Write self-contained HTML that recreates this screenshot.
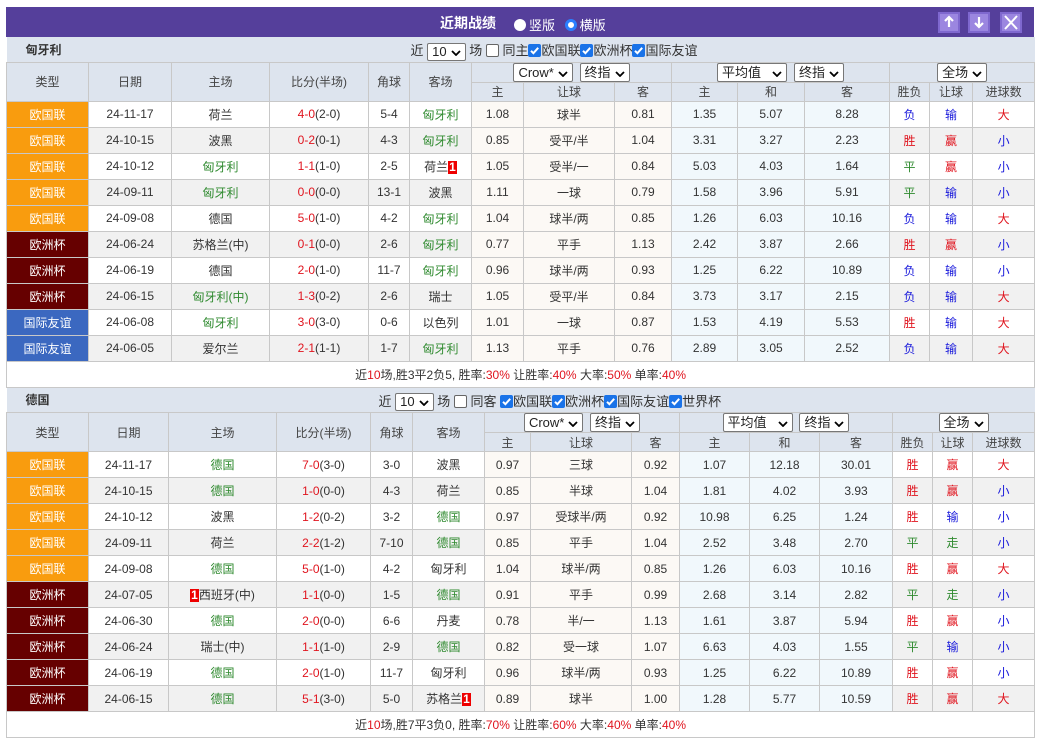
<!DOCTYPE html>
<html><head><meta charset="utf-8"><style>
*{box-sizing:border-box}
body{margin:0;background:#fff;font-family:"Liberation Sans","Noto Sans CJK SC",sans-serif;font-size:12px;color:#333;width:1038px;height:741px;overflow:hidden;position:relative}
.wrap{position:absolute;left:6px;top:7px;width:1028px}
.top{height:30px;background:#553f9b;color:#fff;position:relative}
.top .t{position:absolute;left:434px;top:6px;font-size:14px;font-weight:bold}
.rad{display:inline-block;width:12px;height:12px;border-radius:50%;background:#fff;vertical-align:-1px;margin:0 3px 0 6px}
.rad.on{border:3px solid #2a7fff}
.top .r{position:absolute;left:502px;top:8px;font-size:13px}
.btn{position:absolute;top:5px;width:22px;height:21px;background:#9b86e0;border:2px solid #7f68cf}
table{border-collapse:collapse;table-layout:fixed;width:1028px}
td{border:1px solid #c8c8c8;text-align:center;height:26px;padding:0;white-space:nowrap;overflow:hidden}
tr.h td{background:#dde4ee;height:20px;color:#444}
tr.h2 td{height:19px}
tr.sec td{background:#dde4ee;height:25px;border-left:none;border-right:none;border-top:none;text-align:left;position:relative}
tr.g td{background:#f1f1f1}
td.o,tr.g td.o{background:#fcf9f5}
td.a,tr.g td.a{background:#f1f8fc}
td.eg{background:#f99c0e!important;color:#fff}
td.ec{background:#660000!important;color:#fff}
td.fr{background:#3b68c0!important;color:#fff}
.gr{color:#2f8a2f}.rd{color:#e0141e}.bl{color:#1a1adb}
.n{display:inline-block;background:#e00;color:#fff;font-weight:bold;padding:0 1px;line-height:13px}
.sel{display:inline-block;background:#fff;border:1px solid #777;border-radius:2px;height:19px;line-height:17px;padding:0 4px;font-size:13px;color:#222;vertical-align:middle;text-align:left}
.sel svg{vertical-align:0px;margin-left:4px}
.cb{display:inline-block;width:13px;height:13px;background:#1a73e8;border-radius:2px;vertical-align:-2px;position:relative}
.cbe{display:inline-block;width:13px;height:13px;border:1px solid #666;border-radius:2px;vertical-align:-2px;background:#fff}
.sum td{height:26px;background:#fff}
.ctrl{position:absolute;top:3px;font-size:13px;color:#333}
</style></head><body>
<svg width="0" height="0" style="position:absolute"><defs><symbol id="ck" viewBox="0 0 13 13"><path d="M3 6.8l2.4 2.4 4.8-5.4" fill="none" stroke="#fff" stroke-width="2"/></symbol><symbol id="dn" viewBox="0 0 10 6"><path d="M1 1l4 4 4-4" fill="none" stroke="#000" stroke-width="1.8"/></symbol></defs></svg>
<div class="wrap">
<div class="top"><span class="t">近期战绩</span><span class="r"><span class="rad"></span>竖版 <span class="rad on"></span>横版</span>
<div class="btn" style="left:932px"><svg width="18" height="17" viewBox="0 0 18 17"><path d="M9 3v10M5 7l4-4 4 4" stroke="#fff" stroke-width="2.2" fill="none"/></svg></div>
<div class="btn" style="left:962px"><svg width="18" height="17" viewBox="0 0 18 17"><path d="M9 3v10M5 9l4 4 4-4" stroke="#fff" stroke-width="2.2" fill="none"/></svg></div>
<div class="btn" style="left:994px"><svg width="18" height="17" viewBox="0 0 18 17"><path d="M3 2l12 13M15 2L3 15" stroke="#fff" stroke-width="2"/></svg></div>
</div>
<table>
<colgroup><col style="width:82px"><col style="width:83px"><col style="width:98px"><col style="width:99px"><col style="width:41px"><col style="width:62px"><col style="width:52px"><col style="width:91px"><col style="width:57px"><col style="width:66px"><col style="width:67px"><col style="width:85px"><col style="width:40px"><col style="width:43px"><col style="width:62px"></colgroup>
<tr class="sec"><td colspan="15" style="height:25px"><b style="margin-left:19px">匈牙利</b><span class="ctrl" style="left:404px">近 <span class="sel" style="height:18px;line-height:16px">10<svg width="10" height="6"><use href="#dn"/></svg></span> 场 <span class="cbe"></span> 同主<span class="cb"><svg width="13" height="13"><use href="#ck"/></svg></span>欧国联<span class="cb"><svg width="13" height="13"><use href="#ck"/></svg></span>欧洲杯<span class="cb"><svg width="13" height="13"><use href="#ck"/></svg></span>国际友谊</span></td></tr>
<tr class="h"><td rowspan="2">类型</td><td rowspan="2">日期</td><td rowspan="2">主场</td><td rowspan="2">比分(半场)</td><td rowspan="2">角球</td><td rowspan="2">客场</td><td colspan="3"><span class="sel">Crow*<svg width="10" height="6"><use href="#dn"/></svg></span> &nbsp;<span class="sel">终指<svg width="10" height="6"><use href="#dn"/></svg></span></td><td colspan="3"><span class="sel">平均值 &nbsp;<svg width="10" height="6"><use href="#dn"/></svg></span> &nbsp;<span class="sel">终指<svg width="10" height="6"><use href="#dn"/></svg></span></td><td colspan="3"><span class="sel">全场<svg width="10" height="6"><use href="#dn"/></svg></span></td></tr>
<tr class="h h2"><td>主</td><td>让球</td><td>客</td><td>主</td><td>和</td><td>客</td><td>胜负</td><td>让球</td><td>进球数</td></tr>
<tr><td class="eg">欧国联</td><td>24-11-17</td><td>荷兰</td><td><span class="rd">4-0</span>(2-0)</td><td>5-4</td><td class="gr">匈牙利</td><td class="o">1.08</td><td class="o">球半</td><td class="o">0.81</td><td class="a">1.35</td><td class="a">5.07</td><td class="a">8.28</td><td class="bl">负</td><td class="bl">输</td><td class="rd">大</td></tr>
<tr class="g"><td class="eg">欧国联</td><td>24-10-15</td><td>波黑</td><td><span class="rd">0-2</span>(0-1)</td><td>4-3</td><td class="gr">匈牙利</td><td class="o">0.85</td><td class="o">受平/半</td><td class="o">1.04</td><td class="a">3.31</td><td class="a">3.27</td><td class="a">2.23</td><td class="rd">胜</td><td class="rd">赢</td><td class="bl">小</td></tr>
<tr><td class="eg">欧国联</td><td>24-10-12</td><td class="gr">匈牙利</td><td><span class="rd">1-1</span>(1-0)</td><td>2-5</td><td>荷兰<span class="n">1</span></td><td class="o">1.05</td><td class="o">受半/一</td><td class="o">0.84</td><td class="a">5.03</td><td class="a">4.03</td><td class="a">1.64</td><td class="gr">平</td><td class="rd">赢</td><td class="bl">小</td></tr>
<tr class="g"><td class="eg">欧国联</td><td>24-09-11</td><td class="gr">匈牙利</td><td><span class="rd">0-0</span>(0-0)</td><td>13-1</td><td>波黑</td><td class="o">1.11</td><td class="o">一球</td><td class="o">0.79</td><td class="a">1.58</td><td class="a">3.96</td><td class="a">5.91</td><td class="gr">平</td><td class="bl">输</td><td class="bl">小</td></tr>
<tr><td class="eg">欧国联</td><td>24-09-08</td><td>德国</td><td><span class="rd">5-0</span>(1-0)</td><td>4-2</td><td class="gr">匈牙利</td><td class="o">1.04</td><td class="o">球半/两</td><td class="o">0.85</td><td class="a">1.26</td><td class="a">6.03</td><td class="a">10.16</td><td class="bl">负</td><td class="bl">输</td><td class="rd">大</td></tr>
<tr class="g"><td class="ec">欧洲杯</td><td>24-06-24</td><td>苏格兰(中)</td><td><span class="rd">0-1</span>(0-0)</td><td>2-6</td><td class="gr">匈牙利</td><td class="o">0.77</td><td class="o">平手</td><td class="o">1.13</td><td class="a">2.42</td><td class="a">3.87</td><td class="a">2.66</td><td class="rd">胜</td><td class="rd">赢</td><td class="bl">小</td></tr>
<tr><td class="ec">欧洲杯</td><td>24-06-19</td><td>德国</td><td><span class="rd">2-0</span>(1-0)</td><td>11-7</td><td class="gr">匈牙利</td><td class="o">0.96</td><td class="o">球半/两</td><td class="o">0.93</td><td class="a">1.25</td><td class="a">6.22</td><td class="a">10.89</td><td class="bl">负</td><td class="bl">输</td><td class="bl">小</td></tr>
<tr class="g"><td class="ec">欧洲杯</td><td>24-06-15</td><td class="gr">匈牙利(中)</td><td><span class="rd">1-3</span>(0-2)</td><td>2-6</td><td>瑞士</td><td class="o">1.05</td><td class="o">受平/半</td><td class="o">0.84</td><td class="a">3.73</td><td class="a">3.17</td><td class="a">2.15</td><td class="bl">负</td><td class="bl">输</td><td class="rd">大</td></tr>
<tr><td class="fr">国际友谊</td><td>24-06-08</td><td class="gr">匈牙利</td><td><span class="rd">3-0</span>(3-0)</td><td>0-6</td><td>以色列</td><td class="o">1.01</td><td class="o">一球</td><td class="o">0.87</td><td class="a">1.53</td><td class="a">4.19</td><td class="a">5.53</td><td class="rd">胜</td><td class="bl">输</td><td class="rd">大</td></tr>
<tr class="g"><td class="fr">国际友谊</td><td>24-06-05</td><td>爱尔兰</td><td><span class="rd">2-1</span>(1-1)</td><td>1-7</td><td class="gr">匈牙利</td><td class="o">1.13</td><td class="o">平手</td><td class="o">0.76</td><td class="a">2.89</td><td class="a">3.05</td><td class="a">2.52</td><td class="bl">负</td><td class="bl">输</td><td class="rd">大</td></tr>
<tr class="sum"><td colspan="15">近<span class="rd">10</span>场,胜3平2负5, 胜率:<span class="rd">30%</span> 让胜率:<span class="rd">40%</span> 大率:<span class="rd">50%</span> 单率:<span class="rd">40%</span></td></tr>
</table>
<table>
<colgroup><col style="width:82px"><col style="width:80px"><col style="width:108px"><col style="width:94px"><col style="width:42px"><col style="width:72px"><col style="width:46px"><col style="width:101px"><col style="width:48px"><col style="width:70px"><col style="width:70px"><col style="width:73px"><col style="width:40px"><col style="width:40px"><col style="width:62px"></colgroup>
<tr class="sec"><td colspan="15" style="height:25px"><b style="margin-left:19px">德国</b><span class="ctrl" style="left:372px">近 <span class="sel" style="height:18px;line-height:16px">10<svg width="10" height="6"><use href="#dn"/></svg></span> 场 <span class="cbe"></span> 同客 <span class="cb"><svg width="13" height="13"><use href="#ck"/></svg></span>欧国联<span class="cb"><svg width="13" height="13"><use href="#ck"/></svg></span>欧洲杯<span class="cb"><svg width="13" height="13"><use href="#ck"/></svg></span>国际友谊<span class="cb"><svg width="13" height="13"><use href="#ck"/></svg></span>世界杯</span></td></tr>
<tr class="h"><td rowspan="2">类型</td><td rowspan="2">日期</td><td rowspan="2">主场</td><td rowspan="2">比分(半场)</td><td rowspan="2">角球</td><td rowspan="2">客场</td><td colspan="3"><span class="sel">Crow*<svg width="10" height="6"><use href="#dn"/></svg></span> &nbsp;<span class="sel">终指<svg width="10" height="6"><use href="#dn"/></svg></span></td><td colspan="3"><span class="sel">平均值 &nbsp;<svg width="10" height="6"><use href="#dn"/></svg></span> &nbsp;<span class="sel">终指<svg width="10" height="6"><use href="#dn"/></svg></span></td><td colspan="3"><span class="sel">全场<svg width="10" height="6"><use href="#dn"/></svg></span></td></tr>
<tr class="h h2"><td>主</td><td>让球</td><td>客</td><td>主</td><td>和</td><td>客</td><td>胜负</td><td>让球</td><td>进球数</td></tr>
<tr><td class="eg">欧国联</td><td>24-11-17</td><td class="gr">德国</td><td><span class="rd">7-0</span>(3-0)</td><td>3-0</td><td>波黑</td><td class="o">0.97</td><td class="o">三球</td><td class="o">0.92</td><td class="a">1.07</td><td class="a">12.18</td><td class="a">30.01</td><td class="rd">胜</td><td class="rd">赢</td><td class="rd">大</td></tr>
<tr class="g"><td class="eg">欧国联</td><td>24-10-15</td><td class="gr">德国</td><td><span class="rd">1-0</span>(0-0)</td><td>4-3</td><td>荷兰</td><td class="o">0.85</td><td class="o">半球</td><td class="o">1.04</td><td class="a">1.81</td><td class="a">4.02</td><td class="a">3.93</td><td class="rd">胜</td><td class="rd">赢</td><td class="bl">小</td></tr>
<tr><td class="eg">欧国联</td><td>24-10-12</td><td>波黑</td><td><span class="rd">1-2</span>(0-2)</td><td>3-2</td><td class="gr">德国</td><td class="o">0.97</td><td class="o">受球半/两</td><td class="o">0.92</td><td class="a">10.98</td><td class="a">6.25</td><td class="a">1.24</td><td class="rd">胜</td><td class="bl">输</td><td class="bl">小</td></tr>
<tr class="g"><td class="eg">欧国联</td><td>24-09-11</td><td>荷兰</td><td><span class="rd">2-2</span>(1-2)</td><td>7-10</td><td class="gr">德国</td><td class="o">0.85</td><td class="o">平手</td><td class="o">1.04</td><td class="a">2.52</td><td class="a">3.48</td><td class="a">2.70</td><td class="gr">平</td><td class="gr">走</td><td class="bl">小</td></tr>
<tr><td class="eg">欧国联</td><td>24-09-08</td><td class="gr">德国</td><td><span class="rd">5-0</span>(1-0)</td><td>4-2</td><td>匈牙利</td><td class="o">1.04</td><td class="o">球半/两</td><td class="o">0.85</td><td class="a">1.26</td><td class="a">6.03</td><td class="a">10.16</td><td class="rd">胜</td><td class="rd">赢</td><td class="rd">大</td></tr>
<tr class="g"><td class="ec">欧洲杯</td><td>24-07-05</td><td><span class="n">1</span>西班牙(中)</td><td><span class="rd">1-1</span>(0-0)</td><td>1-5</td><td class="gr">德国</td><td class="o">0.91</td><td class="o">平手</td><td class="o">0.99</td><td class="a">2.68</td><td class="a">3.14</td><td class="a">2.82</td><td class="gr">平</td><td class="gr">走</td><td class="bl">小</td></tr>
<tr><td class="ec">欧洲杯</td><td>24-06-30</td><td class="gr">德国</td><td><span class="rd">2-0</span>(0-0)</td><td>6-6</td><td>丹麦</td><td class="o">0.78</td><td class="o">半/一</td><td class="o">1.13</td><td class="a">1.61</td><td class="a">3.87</td><td class="a">5.94</td><td class="rd">胜</td><td class="rd">赢</td><td class="bl">小</td></tr>
<tr class="g"><td class="ec">欧洲杯</td><td>24-06-24</td><td>瑞士(中)</td><td><span class="rd">1-1</span>(1-0)</td><td>2-9</td><td class="gr">德国</td><td class="o">0.82</td><td class="o">受一球</td><td class="o">1.07</td><td class="a">6.63</td><td class="a">4.03</td><td class="a">1.55</td><td class="gr">平</td><td class="bl">输</td><td class="bl">小</td></tr>
<tr><td class="ec">欧洲杯</td><td>24-06-19</td><td class="gr">德国</td><td><span class="rd">2-0</span>(1-0)</td><td>11-7</td><td>匈牙利</td><td class="o">0.96</td><td class="o">球半/两</td><td class="o">0.93</td><td class="a">1.25</td><td class="a">6.22</td><td class="a">10.89</td><td class="rd">胜</td><td class="rd">赢</td><td class="bl">小</td></tr>
<tr class="g"><td class="ec">欧洲杯</td><td>24-06-15</td><td class="gr">德国</td><td><span class="rd">5-1</span>(3-0)</td><td>5-0</td><td>苏格兰<span class="n">1</span></td><td class="o">0.89</td><td class="o">球半</td><td class="o">1.00</td><td class="a">1.28</td><td class="a">5.77</td><td class="a">10.59</td><td class="rd">胜</td><td class="rd">赢</td><td class="rd">大</td></tr>
<tr class="sum"><td colspan="15">近<span class="rd">10</span>场,胜7平3负0, 胜率:<span class="rd">70%</span> 让胜率:<span class="rd">60%</span> 大率:<span class="rd">40%</span> 单率:<span class="rd">40%</span></td></tr>
</table>
</div>
</body></html>
